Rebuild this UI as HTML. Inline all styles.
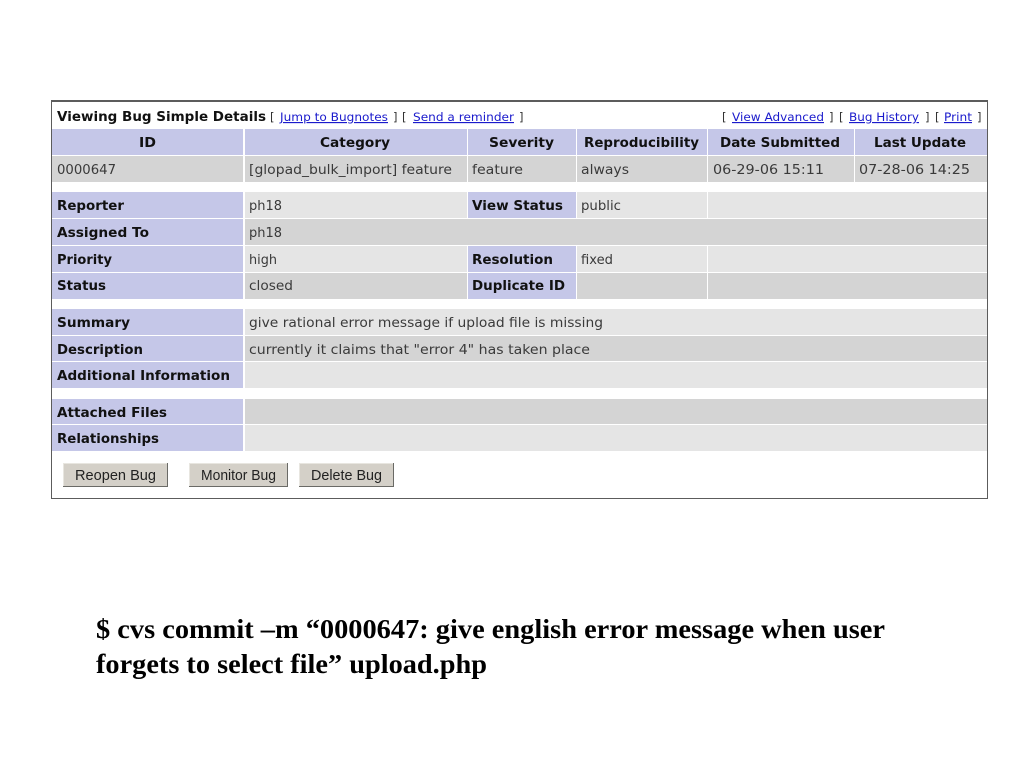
<!DOCTYPE html>
<html><head><meta charset="utf-8"><title>Viewing Bug Simple Details</title>
<style>
html,body{margin:0;padding:0;background:#fff;width:1024px;height:768px;overflow:hidden}
svg{display:block;filter:blur(.3px)}
.t{font-family:"DejaVu Sans",sans-serif;font-size:13px;fill:#3a3a3a}
.b{font-family:"DejaVu Sans",sans-serif;font-size:13px;font-weight:bold;fill:#111}
.s{font-family:"DejaVu Sans",sans-serif;font-size:11.5px;fill:#333}
.l{font-family:"DejaVu Sans",sans-serif;font-size:11.5px;fill:#1a1acc;text-decoration:underline}
.u{font-family:"Liberation Sans",sans-serif;font-size:15px;fill:#222}
.c{font-family:"Liberation Serif",serif;font-size:27px;font-weight:bold;fill:#000}
</style></head><body>
<svg width="1024" height="768" viewBox="0 0 1024 768" xmlns="http://www.w3.org/2000/svg">
<rect x="51" y="100" width="937" height="399" fill="#5c5c5c"/>
<rect x="52" y="102" width="935" height="396" fill="#fff"/>

<!-- header row -->
<g fill="#c5c7e8">
<rect x="52" y="129" width="191" height="26"/><rect x="245" y="129" width="222" height="26"/><rect x="468" y="129" width="108" height="26"/><rect x="577" y="129" width="130" height="26"/><rect x="708" y="129" width="146" height="26"/><rect x="855" y="129" width="132" height="26"/>
</g>
<g fill="#d4d4d4">
<rect x="52" y="156" width="191" height="26"/><rect x="245" y="156" width="222" height="26"/><rect x="468" y="156" width="108" height="26"/><rect x="577" y="156" width="130" height="26"/><rect x="708" y="156" width="146" height="26"/><rect x="855" y="156" width="132" height="26"/>
</g>

<!-- label columns -->
<g fill="#c5c7e8">
<rect x="52" y="192" width="191" height="26"/><rect x="52" y="219" width="191" height="26"/><rect x="52" y="246" width="191" height="26"/><rect x="52" y="273" width="191" height="26"/>
<rect x="52" y="309" width="191" height="26"/><rect x="52" y="336" width="191" height="25"/><rect x="52" y="362" width="191" height="26"/>
<rect x="52" y="399" width="191" height="25"/><rect x="52" y="425" width="191" height="26"/>
<rect x="468" y="192" width="108" height="26"/><rect x="468" y="246" width="108" height="26"/><rect x="468" y="273" width="108" height="26"/>
</g>
<!-- value cells -->
<g fill="#e5e5e5">
<rect x="245" y="192" width="222" height="26"/><rect x="577" y="192" width="130" height="26"/><rect x="708" y="192" width="279" height="26"/>
<rect x="245" y="246" width="222" height="26"/><rect x="577" y="246" width="130" height="26"/><rect x="708" y="246" width="279" height="26"/>
<rect x="245" y="309" width="742" height="26"/><rect x="245" y="362" width="742" height="26"/><rect x="245" y="425" width="742" height="26"/>
</g>
<g fill="#d4d4d4">
<rect x="245" y="219" width="742" height="26"/>
<rect x="245" y="273" width="222" height="26"/><rect x="577" y="273" width="130" height="26"/><rect x="708" y="273" width="279" height="26"/>
<rect x="245" y="336" width="742" height="25"/><rect x="245" y="399" width="742" height="25"/>
</g>

<!-- title line -->
<text class="b" x="57" y="121" textLength="209" lengthAdjust="spacingAndGlyphs">Viewing Bug Simple Details</text>
<text class="s" x="270" y="121">[</text>
<text class="l" x="280" y="121" textLength="108" lengthAdjust="spacingAndGlyphs">Jump to Bugnotes</text>
<text class="s" x="393" y="121">]</text><text class="s" x="402" y="121">[</text>
<text class="l" x="413" y="121" textLength="101" lengthAdjust="spacingAndGlyphs">Send a reminder</text>
<text class="s" x="519" y="121">]</text>
<text class="s" x="722" y="121">[</text>
<text class="l" x="732" y="121" textLength="92" lengthAdjust="spacingAndGlyphs">View Advanced</text>
<text class="s" x="829" y="121">]</text><text class="s" x="839" y="121">[</text>
<text class="l" x="849" y="121" textLength="70" lengthAdjust="spacingAndGlyphs">Bug History</text>
<text class="s" x="925" y="121">]</text><text class="s" x="935" y="121">[</text>
<text class="l" x="944" y="121" textLength="28" lengthAdjust="spacingAndGlyphs">Print</text>
<text class="s" x="977" y="121">]</text>

<!-- headers -->
<text class="b" x="139" y="147" textLength="17" lengthAdjust="spacingAndGlyphs">ID</text>
<text class="b" x="320" y="147" textLength="70" lengthAdjust="spacingAndGlyphs">Category</text>
<text class="b" x="489" y="147" textLength="65" lengthAdjust="spacingAndGlyphs">Severity</text>
<text class="b" x="584" y="147" textLength="115" lengthAdjust="spacingAndGlyphs">Reproducibility</text>
<text class="b" x="720" y="147" textLength="120" lengthAdjust="spacingAndGlyphs">Date Submitted</text>
<text class="b" x="874" y="147" textLength="92" lengthAdjust="spacingAndGlyphs">Last Update</text>

<!-- values row -->
<text class="t" x="57" y="174" textLength="59" lengthAdjust="spacingAndGlyphs">0000647</text>
<text class="t" x="249" y="174" textLength="203" lengthAdjust="spacingAndGlyphs">[glopad_bulk_import] feature</text>
<text class="t" x="472" y="174" textLength="51" lengthAdjust="spacingAndGlyphs">feature</text>
<text class="t" x="581" y="174" textLength="48" lengthAdjust="spacingAndGlyphs">always</text>
<text class="t" x="713" y="174" textLength="111" lengthAdjust="spacingAndGlyphs">06-29-06 15:11</text>
<text class="t" x="859" y="174" textLength="111" lengthAdjust="spacingAndGlyphs">07-28-06 14:25</text>

<!-- labels -->
<text class="b" x="57" y="210" textLength="67" lengthAdjust="spacingAndGlyphs">Reporter</text>
<text class="b" x="57" y="237" textLength="92" lengthAdjust="spacingAndGlyphs">Assigned To</text>
<text class="b" x="57" y="264" textLength="55" lengthAdjust="spacingAndGlyphs">Priority</text>
<text class="b" x="57" y="290" textLength="49" lengthAdjust="spacingAndGlyphs">Status</text>
<text class="b" x="57" y="327" textLength="73" lengthAdjust="spacingAndGlyphs">Summary</text>
<text class="b" x="57" y="354" textLength="86" lengthAdjust="spacingAndGlyphs">Description</text>
<text class="b" x="57" y="380" textLength="173" lengthAdjust="spacingAndGlyphs">Additional Information</text>
<text class="b" x="57" y="417" textLength="110" lengthAdjust="spacingAndGlyphs">Attached Files</text>
<text class="b" x="57" y="443" textLength="102" lengthAdjust="spacingAndGlyphs">Relationships</text>
<text class="b" x="472" y="210" textLength="91" lengthAdjust="spacingAndGlyphs">View Status</text>
<text class="b" x="472" y="264" textLength="81" lengthAdjust="spacingAndGlyphs">Resolution</text>
<text class="b" x="472" y="290" textLength="93" lengthAdjust="spacingAndGlyphs">Duplicate ID</text>

<!-- values -->
<text class="t" x="249" y="210" textLength="33" lengthAdjust="spacingAndGlyphs">ph18</text>
<text class="t" x="249" y="237" textLength="33" lengthAdjust="spacingAndGlyphs">ph18</text>
<text class="t" x="249" y="264" textLength="28" lengthAdjust="spacingAndGlyphs">high</text>
<text class="t" x="249" y="290" textLength="44" lengthAdjust="spacingAndGlyphs">closed</text>
<text class="t" x="581" y="210" textLength="40" lengthAdjust="spacingAndGlyphs">public</text>
<text class="t" x="581" y="264" textLength="32" lengthAdjust="spacingAndGlyphs">fixed</text>
<text class="t" x="249" y="327" textLength="354" lengthAdjust="spacingAndGlyphs">give rational error message if upload file is missing</text>
<text class="t" x="249" y="354" textLength="341" lengthAdjust="spacingAndGlyphs">currently it claims that "error 4" has taken place</text>

<!-- buttons -->
<g>
<rect x="63" y="463" width="105" height="24" fill="#6a6a66"/><rect x="63" y="463" width="104" height="23" fill="#e8e6e0"/><rect x="64" y="464" width="103" height="22" fill="#d4d0c8"/>
<rect x="189" y="463" width="99" height="24" fill="#6a6a66"/><rect x="189" y="463" width="98" height="23" fill="#e8e6e0"/><rect x="190" y="464" width="97" height="22" fill="#d4d0c8"/>
<rect x="299" y="463" width="95" height="24" fill="#6a6a66"/><rect x="299" y="463" width="94" height="23" fill="#e8e6e0"/><rect x="300" y="464" width="93" height="22" fill="#d4d0c8"/>
</g>
<text class="u" x="75" y="480" textLength="81" lengthAdjust="spacingAndGlyphs">Reopen Bug</text>
<text class="u" x="201" y="480" textLength="75" lengthAdjust="spacingAndGlyphs">Monitor Bug</text>
<text class="u" x="311" y="480" textLength="71" lengthAdjust="spacingAndGlyphs">Delete Bug</text>

<!-- caption -->
<text class="c" x="96" y="638" textLength="789" lengthAdjust="spacingAndGlyphs">$ cvs commit –m “0000647: give english error message when user</text>
<text class="c" x="96" y="673" textLength="391" lengthAdjust="spacingAndGlyphs">forgets to select file” upload.php</text>
</svg>
</body></html>
